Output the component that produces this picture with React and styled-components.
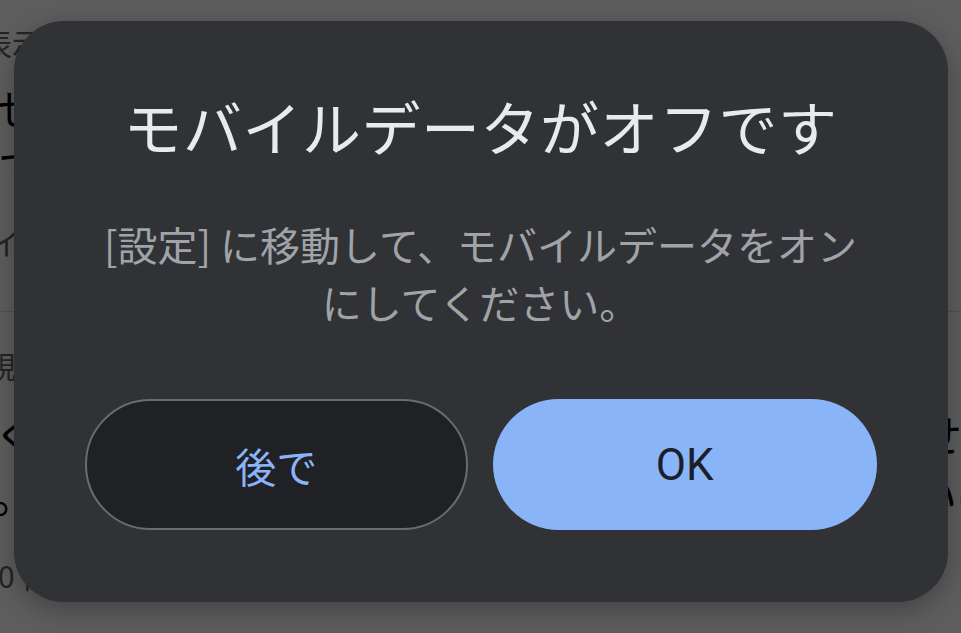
import React from "react";
import styled, { createGlobalStyle } from "styled-components";

const GlobalStyle = createGlobalStyle`
  html, body {
    margin: 0;
    padding: 0;
    width: 961px;
    height: 633px;
    overflow: hidden;
    font-family: "Noto Sans CJK JP", "Noto Sans", sans-serif;
  }
`;

// Page that sits behind the dimmed overlay
const Page = styled.div`
  position: relative;
  width: 961px;
  height: 633px;
  background: #ffffff;
  overflow: hidden;
`;

const Section = styled.div`
  display: flex;
  flex-direction: column;
  padding: ${(p) => p.pad || "0"};
  border-bottom: ${(p) => (p.divider ? "1px solid #dadce0" : "none")};
`;

const Caption = styled.div`
  font-size: 30px;
  line-height: 44px;
  color: #5f6368;
  white-space: nowrap;
  margin: ${(p) => p.mt || "0"} 0 0 ${(p) => p.shift || "0"};
`;

const Body = styled.div`
  font-size: 44px;
  line-height: 60px;
  color: #000;
  white-space: nowrap;
  margin: ${(p) => p.mt || "0"} 0 0 ${(p) => p.shift || "0"};
`;

const Overlay = styled.div`
  position: absolute;
  inset: 0;
  background: rgba(0, 0, 0, 0.63);
  display: flex;
  justify-content: center;
  align-items: flex-start;
  padding-top: 21px;
  box-sizing: border-box;
`;

const Dialog = styled.div`
  width: 934px;
  height: 581px;
  box-sizing: border-box;
  background: #313236;
  border-radius: 50px;
  box-shadow: 0 8px 28px rgba(0, 0, 0, 0.3);
  padding: 63px 71px 72px;
  display: flex;
  flex-direction: column;
  align-items: center;
`;

const Title = styled.h1`
  margin: 0;
  font-size: 59px;
  line-height: 84px;
  font-weight: 400;
  color: #e8eaed;
  text-align: center;
  letter-spacing: 0.5px;
`;

const Message = styled.p`
  margin: 47px 0 0;
  font-size: 40px;
  line-height: 58px;
  color: #a0a3a8;
  text-align: center;
  width: 760px;
`;

const Actions = styled.div`
  margin-top: auto;
  width: 100%;
  display: grid;
  grid-template-columns: 1fr 1fr;
  gap: 25px;
`;

const Button = styled.button`
  height: 131px;
  border-radius: 66px;
  box-sizing: border-box;
  display: flex;
  align-items: center;
  justify-content: center;
  font-family: ${(p) =>
    p.primary ? 'Roboto, "Noto Sans CJK JP", sans-serif' : '"Noto Sans CJK JP", sans-serif'};
  font-size: ${(p) => (p.primary ? "44px" : "41px")};
  font-weight: 400;
  cursor: pointer;
  background: ${(p) => (p.primary ? "#8ab4f8" : "#202124")};
  color: ${(p) => (p.primary ? "#1b1f2a" : "#8ab4f8")};
  border: ${(p) => (p.primary ? "none" : "2px solid #6a6c70")};
`;

export default function App() {
  return (
    <>
      <GlobalStyle />
      <Page>
        <Section pad="20px 0 47px" divider>
          <Caption shift="-18px">表示、ルートと最新情報を確認します</Caption>
          <Body mt="13px" shift="-4px">せっかくの機会なのでお試しください。す</Body>
          <Body shift="-2px">でに設定済みの場合はそのままご利用ください</Body>
          <Caption mt="23px" shift="-10px">イベント情報 ・ 2 件</Caption>
        </Section>
        <Section pad="31px 0 0">
          <Caption shift="-14px">規約とプライバシーについて</Caption>
          <Body mt="17px" shift="-6px">くわしい案内は各地域の番号窓口へお問い合わせ号</Body>
          <Body shift="-8px">。詳細については最新のお知らせをご覧くださいの</Body>
          <Caption mt="29px" shift="-2px">0 件のレビュー</Caption>
        </Section>
        <Overlay>
          <Dialog>
            <Title>モバイルデータがオフです</Title>
            <Message>[設定] に移動して、モバイルデータをオンにしてください。</Message>
            <Actions>
              <Button>後で</Button>
              <Button primary>OK</Button>
            </Actions>
          </Dialog>
        </Overlay>
      </Page>
    </>
  );
}
